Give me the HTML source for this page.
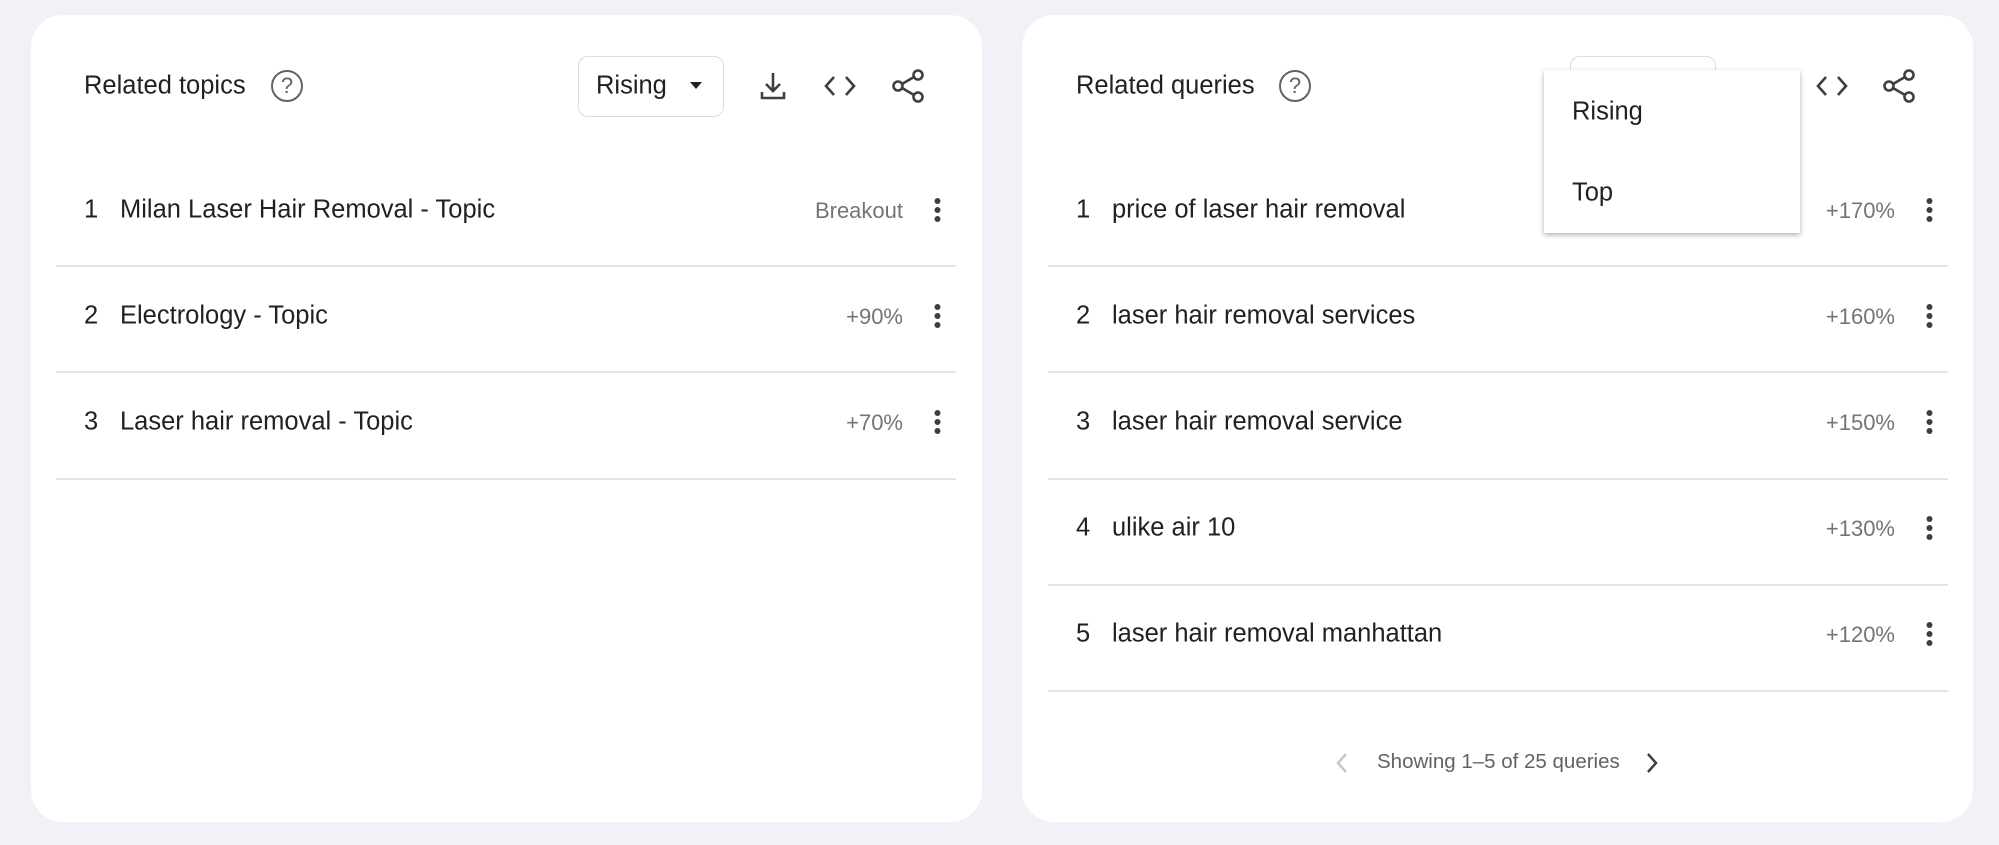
<!DOCTYPE html>
<html><head><style>
body{margin:0;width:1999px;height:845px;background:#f0f2f8;font-family:"Liberation Sans",sans-serif;position:relative;overflow:hidden;color:#202124}
.card{position:absolute;top:15px;width:951px;height:807px;background:#fff;border-radius:32px}
.a{position:absolute;white-space:nowrap}
.t{font-size:25.5px;transform:translateY(-50%)}
.v{font-size:22px;color:#70757a;transform:translateY(-50%);text-align:right}
.hr{position:absolute;height:2px;background:#e4e4e6}
.help{position:absolute;width:28px;height:28px;border:2.5px solid #5f6368;border-radius:50%;color:#5f6368;font-size:22px;text-align:center;line-height:28px;transform:translate(-50%,-50%)}
.keb{position:absolute;width:7px;transform:translate(-50%,-50%)}
.keb i{display:block;width:6px;height:6px;border-radius:50%;background:#3c4043;margin:3px auto}
</style></head><body>
<div class="card" style="left:31px"></div>
<div class="card" style="left:1022px"></div>

<div class="a t" style="left:84px;top:86px">Related topics</div>
<div class="help" style="left:287px;top:86px">?</div>
<div class="a" style="left:578px;top:56px;width:146px;height:61px;border:1.5px solid #dadce0;border-radius:10px;box-sizing:border-box"></div>
<div class="a t" style="left:596px;top:86px">Rising</div>
<div class="a" style="left:690px;top:82px;width:0;height:0;border-left:6px solid transparent;border-right:6px solid transparent;border-top:7px solid #202124"></div>
<svg class="a" style="left:758px;top:70px" width="30" height="32" viewBox="0 0 30 32"><path d="M15 3v18M8 14l7 7 7-7M4 22v6h22v-6" fill="none" stroke="#3c4043" stroke-width="2.6"/></svg>
<svg class="a" style="left:823px;top:72px" width="34" height="28" viewBox="0 0 34 28"><path d="M11 5l-8 9 8 9M23 5l8 9-8 9" fill="none" stroke="#3c4043" stroke-width="2.6"/></svg>
<svg class="a" style="left:890px;top:68px" width="36" height="36" viewBox="0 0 36 36"><circle cx="28" cy="7" r="4.5" fill="none" stroke="#3c4043" stroke-width="2.6"/><circle cx="8" cy="18" r="4.5" fill="none" stroke="#3c4043" stroke-width="2.6"/><circle cx="28" cy="29" r="4.5" fill="none" stroke="#3c4043" stroke-width="2.6"/><path d="M12 16l12-7M12 20l12 7" stroke="#3c4043" stroke-width="2.6"/></svg>

<div class="a t" style="left:84px;top:210px">1</div><div class="a t" style="left:120px;top:210px">Milan Laser Hair Removal - Topic</div><div class="a v" style="right:1096px;top:211px">Breakout</div><div class="keb" style="left:937px;top:210px"><i></i><i></i><i></i></div>
<div class="hr" style="left:56px;top:265px;width:900px"></div>
<div class="a t" style="left:84px;top:316px">2</div><div class="a t" style="left:120px;top:316px">Electrology - Topic</div><div class="a v" style="right:1096px;top:317px">+90%</div><div class="keb" style="left:937px;top:316px"><i></i><i></i><i></i></div>
<div class="hr" style="left:56px;top:371px;width:900px"></div>
<div class="a t" style="left:84px;top:422px">3</div><div class="a t" style="left:120px;top:422px">Laser hair removal - Topic</div><div class="a v" style="right:1096px;top:423px">+70%</div><div class="keb" style="left:937px;top:422px"><i></i><i></i><i></i></div>
<div class="hr" style="left:56px;top:478px;width:900px"></div>

<div class="a t" style="left:1076px;top:86px">Related queries</div>
<div class="help" style="left:1295px;top:86px">?</div>
<div class="a" style="left:1570px;top:56px;width:146px;height:61px;border:1.5px solid #dadce0;border-radius:10px;box-sizing:border-box"></div>
<svg class="a" style="left:1815px;top:72px" width="34" height="28" viewBox="0 0 34 28"><path d="M11 5l-8 9 8 9M23 5l8 9-8 9" fill="none" stroke="#3c4043" stroke-width="2.6"/></svg>
<svg class="a" style="left:1881px;top:68px" width="36" height="36" viewBox="0 0 36 36"><circle cx="28" cy="7" r="4.5" fill="none" stroke="#3c4043" stroke-width="2.6"/><circle cx="8" cy="18" r="4.5" fill="none" stroke="#3c4043" stroke-width="2.6"/><circle cx="28" cy="29" r="4.5" fill="none" stroke="#3c4043" stroke-width="2.6"/><path d="M12 16l12-7M12 20l12 7" stroke="#3c4043" stroke-width="2.6"/></svg>

<div class="a t" style="left:1076px;top:210px">1</div><div class="a t" style="left:1112px;top:210px">price of laser hair removal</div><div class="a v" style="right:104px;top:211px">+170%</div><div class="keb" style="left:1929px;top:210px"><i></i><i></i><i></i></div>
<div class="hr" style="left:1048px;top:265px;width:900px"></div>
<div class="a t" style="left:1076px;top:316px">2</div><div class="a t" style="left:1112px;top:316px">laser hair removal services</div><div class="a v" style="right:104px;top:317px">+160%</div><div class="keb" style="left:1929px;top:316px"><i></i><i></i><i></i></div>
<div class="hr" style="left:1048px;top:371px;width:900px"></div>
<div class="a t" style="left:1076px;top:422px">3</div><div class="a t" style="left:1112px;top:422px">laser hair removal service</div><div class="a v" style="right:104px;top:423px">+150%</div><div class="keb" style="left:1929px;top:422px"><i></i><i></i><i></i></div>
<div class="hr" style="left:1048px;top:478px;width:900px"></div>
<div class="a t" style="left:1076px;top:528px">4</div><div class="a t" style="left:1112px;top:528px">ulike air 10</div><div class="a v" style="right:104px;top:529px">+130%</div><div class="keb" style="left:1929px;top:528px"><i></i><i></i><i></i></div>
<div class="hr" style="left:1048px;top:584px;width:900px"></div>
<div class="a t" style="left:1076px;top:634px">5</div><div class="a t" style="left:1112px;top:634px">laser hair removal manhattan</div><div class="a v" style="right:104px;top:635px">+120%</div><div class="keb" style="left:1929px;top:634px"><i></i><i></i><i></i></div>
<div class="hr" style="left:1048px;top:690px;width:900px"></div>

<svg class="a" style="left:1334px;top:751px" width="16" height="24" viewBox="0 0 16 24"><path d="M12 3l-8 9 8 9" fill="none" stroke="#c4c7ca" stroke-width="2.5"/></svg>
<div class="a" style="left:1377px;top:750px;font-size:20.5px;color:#5f6368">Showing 1–5 of 25 queries</div>
<svg class="a" style="left:1644px;top:751px" width="16" height="24" viewBox="0 0 16 24"><path d="M4 3l8 9-8 9" fill="none" stroke="#3c4043" stroke-width="2.5"/></svg>

<div class="a" style="left:1544px;top:70px;width:256px;height:163px;background:#fff;box-shadow:0 2px 5px rgba(0,0,0,.3)"></div>
<div class="a t" style="left:1572px;top:112px">Rising</div>
<div class="a t" style="left:1572px;top:193px">Top</div>
</body></html>
